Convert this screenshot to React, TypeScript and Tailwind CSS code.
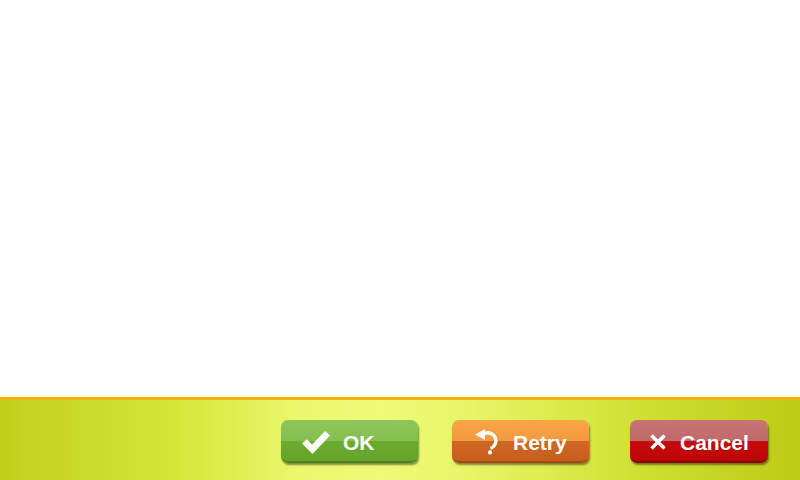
import React from "react";

function Check() {
  return (
    <svg width="28" height="23" viewBox="0 0 28 23" className="shrink-0">
      <polygon points="0,12.5 4.8,8.3 10,13.6 23.2,0 28,4.5 10.5,23" fill="#ffffff" />
    </svg>
  );
}

function RetryIcon() {
  return (
    <svg width="27" height="26" viewBox="0 0 27 26" className="shrink-0">
      <path d="M10.5 4.6 A8 8 0 1 1 16.5 19.4" fill="none" stroke="#ffffff" strokeWidth="3.4" />
      <polygon points="1,5.5 11,0 11,11" fill="#ffffff" />
      <circle cx="16" cy="23.4" r="2.1" fill="#ffffff" />
    </svg>
  );
}

function XIcon() {
  return (
    <svg width="16" height="16" viewBox="0 0 16 16" className="shrink-0">
      <path d="M1.5 1.5 L14.5 14.5 M14.5 1.5 L1.5 14.5" stroke="#ffffff" strokeWidth="3.5" />
    </svg>
  );
}

export default function App() {
  return (
    <div
      className="w-[800px] h-[480px] flex flex-col overflow-hidden"
      style={{ fontFamily: '"Liberation Sans", Arial, sans-serif' }}
    >
      <div className="h-[397px] bg-white" />
      <div className="h-[3px] bg-[#f4b300]" />
      <div className="h-[80px] flex items-start pt-[20px] pl-[281px] bg-[linear-gradient(to_right,#c0d01a_0%,#d6e638_22%,#ebf96e_38%,#eefb78_48%,#e6f464_60%,#d2e236_78%,#bccb14_100%)]">
        <button className="w-[137px] h-[43px] rounded-[7px] flex items-center pt-[3px] pl-[21px] gap-[13px] text-white font-bold text-[21px] shadow-[1px_2px_2px_rgba(0,0,0,0.45)] border-b-2 border-[#4b861c] bg-[linear-gradient(to_bottom,#8fc65a_0%,#85bf4f_50%,#6cab2e_52%,#66a42a_100%)]">
          <Check />
          <span className="leading-none">OK</span>
        </button>
        <button className="ml-[34px] w-[137px] h-[43px] rounded-[7px] flex items-center pt-[3px] pl-[22px] gap-[12px] text-white font-bold text-[21px] shadow-[1px_2px_2px_rgba(0,0,0,0.45)] border-b-2 border-[#a24a12] bg-[linear-gradient(to_bottom,#f9a548_0%,#f29a3e_50%,#d06722_52%,#c95e1d_100%)]">
          <RetryIcon />
          <span className="leading-none">Retry</span>
        </button>
        <button className="ml-[41px] w-[138px] h-[43px] rounded-[7px] flex items-center pt-[3px] pl-[20px] gap-[14px] text-white font-bold text-[21px] shadow-[1px_2px_2px_rgba(0,0,0,0.45)] border-b-2 border-[#8c0000] bg-[linear-gradient(to_bottom,#c87474_0%,#c06a6a_50%,#c50c0c_52%,#bb0505_100%)]">
          <XIcon />
          <span className="leading-none">Cancel</span>
        </button>
      </div>
    </div>
  );
}
